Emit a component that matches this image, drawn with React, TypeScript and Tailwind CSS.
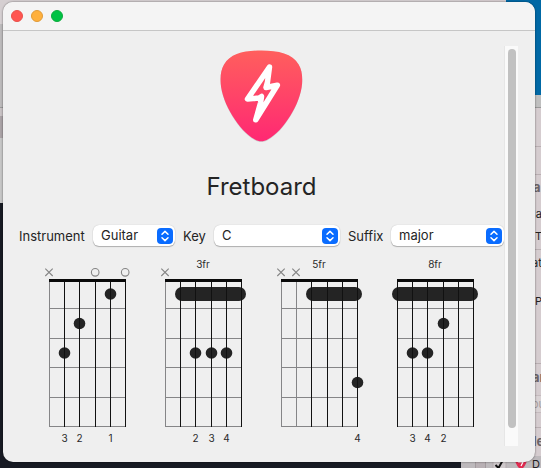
const STRINGS = [12.5, 27.5, 42.5, 58.5, 73.5, 88.5];
const FRETS = [52.5, 82.5, 111.5, 141.5, 170.5];
const DOT_ROWS = [38, 67.5, 97, 126.5];

type Chord = {
  id: string;
  base?: string;
  muted: number[];
  open: number[];
  barre?: number;
  dots: { string: number; fret: number }[];
  fingers: { string: number; finger: number }[];
};

const CHORDS: Chord[] = [
  {
    id: "open",
    muted: [0],
    open: [3, 5],
    dots: [
      { string: 4, fret: 0 },
      { string: 2, fret: 1 },
      { string: 1, fret: 2 },
    ],
    fingers: [
      { string: 1, finger: 3 },
      { string: 2, finger: 2 },
      { string: 4, finger: 1 },
    ],
  },
  {
    id: "third",
    base: "3fr",
    muted: [0],
    open: [],
    barre: 1,
    dots: [
      { string: 2, fret: 2 },
      { string: 3, fret: 2 },
      { string: 4, fret: 2 },
    ],
    fingers: [
      { string: 2, finger: 2 },
      { string: 3, finger: 3 },
      { string: 4, finger: 4 },
    ],
  },
  {
    id: "fifth",
    base: "5fr",
    muted: [0, 1],
    open: [],
    barre: 2,
    dots: [{ string: 5, fret: 3 }],
    fingers: [{ string: 5, finger: 4 }],
  },
  {
    id: "eighth",
    base: "8fr",
    muted: [],
    open: [],
    barre: 0,
    dots: [
      { string: 3, fret: 1 },
      { string: 1, fret: 2 },
      { string: 2, fret: 2 },
    ],
    fingers: [
      { string: 1, finger: 3 },
      { string: 2, finger: 4 },
      { string: 3, finger: 2 },
    ],
  },
];

function ChordDiagram({ chord }: { chord: Chord }) {
  return (
    <svg width="101" height="190" viewBox="0 0 101 190" className="block shrink-0">
      {chord.base && (
        <text x="50" y="12" textAnchor="middle" className="fill-[#2a2a2a] text-[10px]">
          {chord.base}
        </text>
      )}
      {chord.muted.map((s) => {
        const x = STRINGS[s] - 0.5;
        return (
          <path
            key={s}
            d={`M${x - 3.7} 12.6l7.400 7.400M${x + 3.7} 12.6l-7.400 7.400`}
            stroke="#858585"
            strokeWidth="1.1"
          />
        );
      })}
      {chord.open.map((s) => (
        <circle key={s} cx={STRINGS[s] - 0.3} cy="16.3" r="3.8" fill="none" stroke="#858585" strokeWidth="1.1" />
      ))}
      {FRETS.map((y) => (
        <path key={y} d={`M12 ${y}H89`} stroke="#858587" />
      ))}
      {chord.barre !== undefined && (
        <rect
          x={STRINGS[chord.barre] - 5.5}
          y="31"
          width={STRINGS[5] - STRINGS[chord.barre] + 10}
          height="14"
          rx="7"
          fill="#242424"
        />
      )}
      {chord.dots.map((d) => (
        <circle key={d.string} cx={STRINGS[d.string]} cy={DOT_ROWS[d.fret]} r="5.8" fill="#242424" />
      ))}
      {STRINGS.map((x, s) => (
        <path key={x} d={`M${x} 24V171`} stroke={chord.muted.includes(s) ? "#858587" : "#111111"} />
      ))}
      <rect x="12" y="23" width="77" height="3" fill="#0a0a0a" />
      {chord.fingers.map((f) => (
        <text
          key={f.string}
          x={STRINGS[f.string]}
          y="186"
          textAnchor="middle"
          className="fill-[#2a2a2a] text-[10px]"
        >
          {f.finger}
        </text>
      ))}
    </svg>
  );
}

function PickLogo() {
  return (
    <svg width="83" height="94" viewBox="0.5 0 83 94" className="block">
      <defs>
        <linearGradient id="pick" x1="0" y1="0" x2="0" y2="1">
          <stop offset="0" stopColor="#ff5f5d" />
          <stop offset="1" stopColor="#ff2873" />
        </linearGradient>
      </defs>
      <path
        d="M42 1.2C25 1.2 11 4 4.500 15C1.500 20 0.700 26 1.200 34C2.500 54 20 82 35 90C40 92.800 43.500 92.800 48.500 90C64 82 81.200 54 82.600 34C83.100 26 82.200 20 79.200 15C73 4 59 1.200 42 1.200Z"
        fill="#b9b9b9"
        opacity="0.6"
      />
      <path
        d="M42 0.500C25 0.500 11 3.500 4.500 14.500C1.500 19.500 0.700 25.500 1.200 33.500C2.500 53.500 20 81 35 89.300C40 92 43.500 92 48.500 89.300C64 81 81.200 53.500 82.600 33.500C83.100 25.500 82.200 19.500 79.200 14.500C73 3.500 59 0.500 42 0.500Z"
        fill="url(#pick)"
      />
      <path
        d="M50 17L28 49L39.500 48L42 46.500L41 53L36.300 69.800L57.800 35.200L46.500 37.500L48 32Z"
        fill="none"
        stroke="#fff"
        strokeWidth="5.500"
        strokeLinejoin="round"
      />
    </svg>
  );
}

function Picker({
  id,
  label,
  options,
  labelClass,
  boxClass,
}: {
  id: string;
  label: string;
  options: string[];
  labelClass: string;
  boxClass: string;
}) {
  return (
    <>
      <label htmlFor={id} className={`shrink-0 whitespace-nowrap ${labelClass}`}>
        {label}
      </label>
      <div className={`grid min-w-0 items-center ${boxClass}`}>
        <select
          id={id}
          className="col-start-1 row-start-1 block h-[21px] w-full appearance-none rounded-[6px] bg-white pr-6 pb-px pl-2 text-[13px] leading-5 text-[#242424] shadow-[0_0_1px_rgba(0,0,0,0.25),0_1px_1px_rgba(0,0,0,0.25)] outline-none"
        >
          {options.map((o) => (
            <option key={o}>{o}</option>
          ))}
        </select>
        <svg
          width="16"
          height="16"
          viewBox="0 0 16 16"
          className="pointer-events-none col-start-1 row-start-1 mr-[2px] justify-self-end"
        >
          <rect width="16" height="16" rx="4" fill="#0a6cff" />
          <path
            d="M5 6.300L8 3.400L11 6.300M5 9.700L8 12.600L11 9.700"
            fill="none"
            stroke="#fff"
            strokeWidth="1.500"
            strokeLinecap="round"
            strokeLinejoin="round"
          />
        </svg>
      </div>
    </>
  );
}

/* Other windows that show around the edges of the front one. */
function Desktop() {
  return (
    <div aria-hidden="true" className="absolute inset-0 flex overflow-hidden">
      <div className="flex min-w-0 grow flex-col">
        <div className="h-6 bg-[#d5cfd1]" />
        <div className="h-[84px] border-b border-[#999999] bg-[#bcbabb]" />
        <div className="h-2 bg-[#c8c2c4]" />
        <div className="h-[22px] bg-[#aaa3a6]" />
        <div className="h-[65px] bg-[#c6c6c6]" />
        <div className="grow bg-[#171a23]" />
      </div>
      <div className="flex w-20 shrink-0 flex-col bg-[#d5cccf] text-[11px] leading-4 whitespace-nowrap text-[#222222]">
        <div className="flex h-[95px] shrink-0 justify-end">
          <div className="w-[35px] bg-[#0068a5]" />
        </div>
        <div className="h-[13px] shrink-0 border-b border-[#999999] bg-[#bfbfbf]" />
        <div className="h-[39px] shrink-0 border-b border-[#b9afb2]" />
        <div className="h-7 shrink-0 border-b border-[#b9afb2]" />
        <div className="flex h-[75px] shrink-0 flex-col border-b border-[#b9afb2] pt-1 pl-[72px]">
          <span className="text-[13px] font-bold text-[#6b6467]">a</span>
          <span className="mt-[11px]">la</span>
          <span className="mt-[6px] pl-[2px]">Ty</span>
        </div>
        <div className="flex h-[114px] shrink-0 flex-col border-b border-[#b9afb2] pt-[5px] pl-[71px]">
          <span>at</span>
          <span className="mt-[22px] pl-[3px]">P</span>
        </div>
        <div className="flex h-[64px] shrink-0 flex-col border-b border-[#b9afb2] pt-[5px]">
          <span className="pl-[71px] text-[13px] font-bold text-[#6b6467]">ar</span>
          <span className="mt-[10px] border-y border-[#c5bbbe] bg-[#d9d2d4] pl-[71px] text-[#a59da0]">ou</span>
        </div>
        <div className="h-7 shrink-0 pt-[5px] pl-[72px] text-[13px] font-bold text-[#6b6467]">le</div>
        <div className="flex grow items-start bg-[#bdb9bc] pl-[14px]">
          <svg width="57" height="12" viewBox="0 0 57 12" className="block shrink-0">
            <rect x="0.5" y="-4" width="10" height="20" fill="#b8b0b4" stroke="#a39b9e" />
            <rect x="18" y="-4" width="13" height="20" fill="#cfc9cb" stroke="#b3abae" />
            <path d="M20.500 9l3 3l5-9" fill="none" stroke="#111" strokeWidth="2" />
            <path d="M40 0h12q1 8-6 14q-7-6-6-14" fill="#e02b50" />
            <path d="M47 1l-3 5h4l-2 4" fill="none" stroke="#fff" strokeWidth="1.200" />
          </svg>
          <span>D</span>
        </div>
      </div>
    </div>
  );
}

export default function App() {
  return (
    <div className="relative isolate h-screen overflow-hidden pt-[2px] pr-[6px] pb-[6px] pl-[3px] font-['Inter','Liberation_Sans',sans-serif] text-[#242424]">
      <Desktop />
      <div className="relative flex h-full flex-col overflow-hidden rounded-[10px] bg-[#efefef] shadow-[0_0_2px_rgba(0,0,0,0.6)]">
        <header className="flex h-[29px] shrink-0 items-center gap-2 border-b border-[#c6c6c6] bg-[#f4f4f4] px-2">
          <button aria-label="Close" className="size-3 rounded-full border border-[#e8504a] bg-[#ff5550]" />
          <button aria-label="Minimize" className="size-3 rounded-full border border-[#df9a38] bg-[#ffb03d]" />
          <button aria-label="Zoom" className="size-3 rounded-full border border-[#0dab3c] bg-[#00c245]" />
        </header>
        <div className="flex min-h-0 grow pt-[15px] pr-[17px] pb-4 pl-4">
          <main className="flex min-w-0 grow flex-col">
            <div className="flex justify-center pt-1">
              <PickLogo />
            </div>
            <h1 className="mt-[27px] text-center text-[24px] leading-8 font-normal">Fretboard</h1>
            <form className="mt-[22px] flex items-center gap-2 text-[13px] leading-5">
              <Picker id="instrument" label="Instrument" options={["Guitar", "Ukulele"]} labelClass="w-[66px]" boxClass="w-[82px] shrink-0" />
              <Picker id="key" label="Key" options={["C", "D", "E", "F", "G", "A", "B"]} labelClass="w-[23px]" boxClass="grow basis-[126px]" />
              <Picker id="suffix" label="Suffix" options={["major", "minor"]} labelClass="w-[35px]" boxClass="grow basis-[113px]" />
            </form>
            <section aria-label="Chord diagrams" className="mt-[10px] flex justify-center gap-[15px]">
              {CHORDS.map((c) => (
                <ChordDiagram key={c.id} chord={c} />
              ))}
            </section>
          </main>
          <div className="flex w-[14px] shrink-0 justify-center border-l border-[#e6e6e6] bg-[#fafafa] pt-[3px] pb-[18px]">
            <div className="w-2 rounded-full bg-[#c1c1c1]" />
          </div>
        </div>
      </div>
    </div>
  );
}
